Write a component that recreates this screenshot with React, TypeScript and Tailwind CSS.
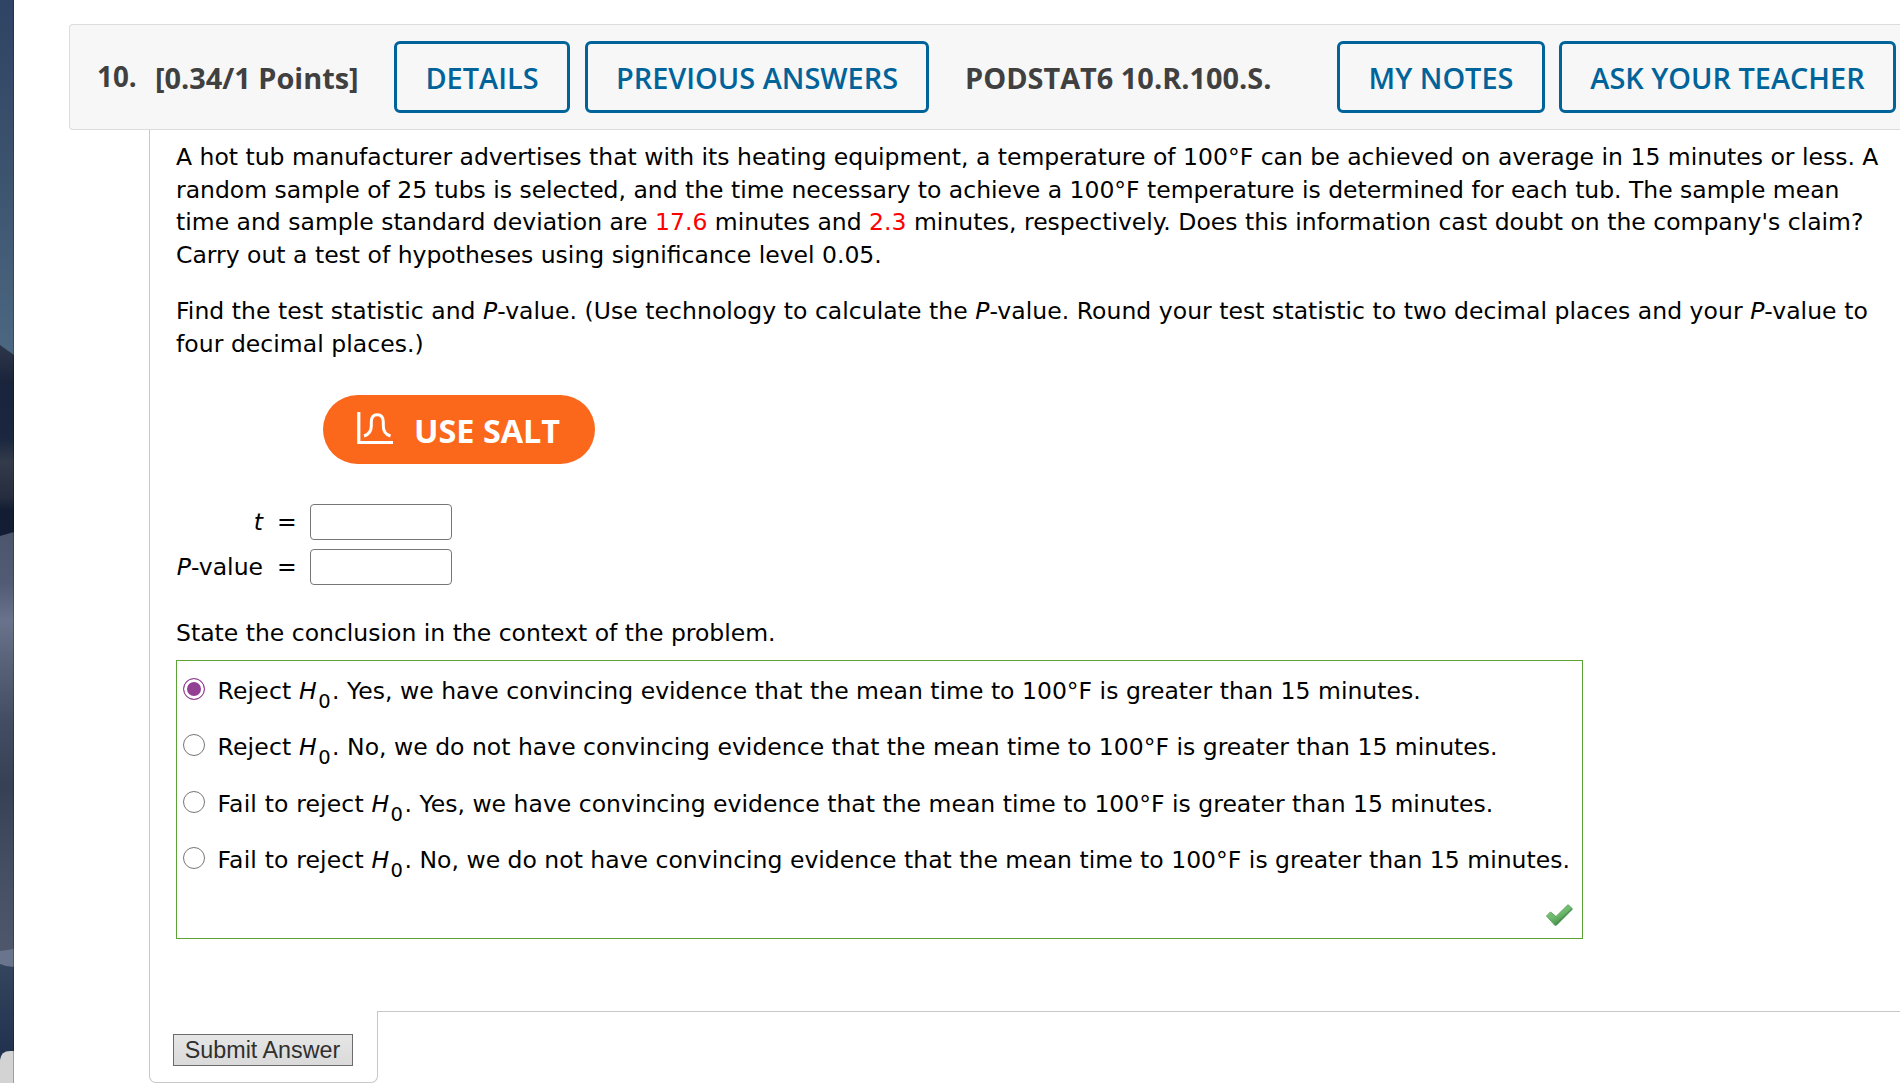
import { useState } from "react";
import type { ReactNode } from "react";

const H0 = () => (
  <>
    <i>H</i>
    <sub className="bottom-[-9px] mr-[1.5px] ml-[1.5px] text-[19.5px]">0</sub>
  </>
);

const options = [
  { start: "Reject ", end: ". Yes, we have convincing evidence that the mean time to 100°F is greater than 15 minutes." },
  { start: "Reject ", end: ". No, we do not have convincing evidence that the mean time to 100°F is greater than 15 minutes." },
  { start: "Fail to reject ", end: ". Yes, we have convincing evidence that the mean time to 100°F is greater than 15 minutes." },
  { start: "Fail to reject ", end: ". No, we do not have convincing evidence that the mean time to 100°F is greater than 15 minutes." },
];

function HeaderButton({ className, children }: { className: string; children: ReactNode }) {
  return (
    <button className={`h-[72px] shrink-0 rounded-[6px] border-[3px] border-[#00639a] pt-[2px] text-center font-semibold whitespace-nowrap text-[#00639a] ${className}`}>
      {children}
    </button>
  );
}

// slice of the desktop wallpaper left of the window
function Wallpaper() {
  return (
    <svg className="h-[1083px] w-[14px] shrink-0" viewBox="0 0 14 1083" preserveAspectRatio="none">
      <defs>
        <linearGradient id="sky" x1="0" y1="0" x2="0" y2="1">
          <stop offset="0" stopColor="#2f4364" />
          <stop offset="0.5" stopColor="#3d546f" />
          <stop offset="1" stopColor="#4c6882" />
        </linearGradient>
        <linearGradient id="rock" x1="0" y1="0" x2="0" y2="1">
          <stop offset="0" stopColor="#2e3649" />
          <stop offset="0.2" stopColor="#18243b" />
          <stop offset="0.48" stopColor="#1a273e" />
          <stop offset="0.6" stopColor="#333b4a" />
          <stop offset="0.78" stopColor="#252d3e" />
          <stop offset="0.85" stopColor="#121d33" />
          <stop offset="1" stopColor="#131e36" />
        </linearGradient>
        <linearGradient id="sand" x1="0" y1="0" x2="0" y2="1">
          <stop offset="0" stopColor="#4b566d" />
          <stop offset="0.12" stopColor="#515c74" />
          <stop offset="0.21" stopColor="#69738b" />
          <stop offset="0.3" stopColor="#59637a" />
          <stop offset="0.45" stopColor="#424d63" />
          <stop offset="0.6" stopColor="#364156" />
          <stop offset="0.8" stopColor="#454f64" />
          <stop offset="1" stopColor="#4e576b" />
        </linearGradient>
        <linearGradient id="lake" x1="0" y1="0" x2="0" y2="1">
          <stop offset="0" stopColor="#34455f" />
          <stop offset="1" stopColor="#1b2c49" />
        </linearGradient>
      </defs>
      <rect width="14" height="360" fill="url(#sky)" />
      <path d="M0 345L14 355V540H0Z" fill="url(#rock)" />
      <path d="M0 536L14 532V955H0Z" fill="url(#sand)" />
      <path d="M0 951L14 949V970H0Z" fill="#69758d" />
      <path d="M0 964Q7 967 14 967V1083H0Z" fill="url(#lake)" />
      <path d="M0 1083V1060Q1 1051 10 1051H14V1083Z" fill="#d3d3d3" />
      <rect x="13" width="1" height="1083" fill="#000" fillOpacity="0.25" />
    </svg>
  );
}

function SaltIcon() {
  return (
    <svg className="mb-[2px] h-[33px] w-[36px]" viewBox="0 0 36 33" fill="none" stroke="#fff">
      <path d="M1.8 0V30.5H36" strokeWidth="3.2" />
      <path d="M7 24C12 22.5 14.3 19.5 14.3 14V10C14.3 5.5 16 2.7 20.2 2.7S26.3 5.5 26.3 10V14C26.3 19.5 28.3 22.5 33.5 24" strokeWidth="3" />
    </svg>
  );
}

function CheckMark() {
  return (
    <svg className="h-[24px] w-[29px]" viewBox="0 0 29 24">
      <defs>
        <linearGradient id="check" x1="0" y1="0" x2="0.6" y2="1">
          <stop offset="0" stopColor="#8bc98a" />
          <stop offset="0.55" stopColor="#6dba6d" />
          <stop offset="1" stopColor="#3f8842" />
        </linearGradient>
      </defs>
      <path d="M1.5 13L5.5 9L11 13.5L23 1.7L27.5 5.8L11 22.5H10Z" fill="url(#check)" stroke="#5fa661" strokeWidth="1" strokeLinejoin="round" />
      <path d="M11 21.8L27 6" stroke="#3f8444" strokeWidth="1.4" strokeOpacity="0.7" />
    </svg>
  );
}

export default function App() {
  const [selected, setSelected] = useState(0);
  const [tValue, setTValue] = useState("");
  const [pValue, setPValue] = useState("");

  return (
    <div className="flex h-[1083px] w-[1900px] overflow-hidden bg-white font-['DejaVu_Sans',sans-serif] text-[23.5px] leading-[32.7px] text-black">
      <Wallpaper />
      <main className="flex min-w-0 flex-1 flex-col pt-[24px] pl-[55px]">
        <header className="flex h-[106px] shrink-0 items-center rounded-l-[4px] border border-r-0 border-[#dcdcdc] bg-[#f7f7f7] pl-[27px] font-['Open_Sans',sans-serif] text-[28.9px] text-[#404040]">
          <div className="w-[58px] shrink-0 pb-[1px] text-[27.8px] font-bold">10.</div>
          <div className="w-[239px] shrink-0 pt-[2px] font-bold whitespace-nowrap">[0.34/1 Points]</div>
          <HeaderButton className="w-[176px]">DETAILS</HeaderButton>
          <HeaderButton className="ml-[15px] w-[344px]">PREVIOUS ANSWERS</HeaderButton>
          <div className="ml-[36px] w-[372px] shrink-0 pt-[2px] font-bold whitespace-nowrap">PODSTAT6 10.R.100.S.</div>
          <HeaderButton className="w-[208px]">MY NOTES</HeaderButton>
          <HeaderButton className="ml-[14px] w-[337px]">ASK YOUR TEACHER</HeaderButton>
        </header>

        <section className="ml-[80px] h-[881px] shrink-0 border-l border-[#c8c8c8] pt-[11px] pl-[26px]">
          <p className="whitespace-nowrap">
            A hot tub manufacturer advertises that with its heating equipment, a temperature of 100°F can be achieved on average in 15 minutes or less. A<br />
            <span className="tracking-[-0.02px]">random sample of 25 tubs is selected, and the time necessary to achieve a 100°F temperature is determined for each tub. The sample mean</span><br />
            time and sample standard deviation are <span className="text-[#ff0000]">17.6</span> minutes and <span className="text-[#ff0000]">2.3</span> minutes, respectively. Does this information cast doubt on the company's claim?<br />
            Carry out a test of hypotheses using significance level 0.05.
          </p>
          <p className="mt-[23.2px] tracking-[0.04px] whitespace-nowrap">
            Find the test statistic and <i>P</i>-value. (Use technology to calculate the <i>P</i>-value. Round your test statistic to two decimal places and your <i>P</i>-value to<br />
            four decimal places.)
          </p>

          <button className="mt-[35px] ml-[147px] flex h-[69px] w-[272px] items-center rounded-full bg-[#fb681c] pl-[34px] font-['Open_Sans',sans-serif] text-[32.4px] font-bold whitespace-nowrap text-white">
            <SaltIcon />
            <span className="pt-[1px] pl-[21px]">USE SALT</span>
          </button>

          <div className="mt-[39.6px] grid grid-cols-[87px_47px_142px] items-center gap-y-[9px]">
            <i className="text-right">t</i>
            <span className="pl-[14px]">=</span>
            <input value={tValue} onChange={e => setTValue(e.target.value)} className="h-[36px] rounded-[4px] border border-[#767676] bg-white px-2 outline-none" />
            <span className="text-right whitespace-nowrap"><i>P</i>-value</span>
            <span className="pl-[14px]">=</span>
            <input value={pValue} onChange={e => setPValue(e.target.value)} className="h-[36px] rounded-[4px] border border-[#767676] bg-white px-2 outline-none" />
          </div>

          <p className="mt-[32px]">State the conclusion in the context of the problem.</p>
          <div className="mt-[10px] flex h-[279px] w-[1407px] flex-col border border-[#5ca336] pt-[14px] pl-[6px]">
            {options.map((o, i) => (
              <label key={i} className="flex h-[56.6px] items-start whitespace-nowrap">
                <input
                  type="radio"
                  name="conclusion"
                  checked={selected === i}
                  onChange={() => setSelected(i)}
                  className="mt-[3px] mr-[12.6px] size-[22px] shrink-0 appearance-none rounded-full border-[1.5px] border-[#767676] checked:border-[#933f93] checked:bg-[#933f93] checked:shadow-[inset_0_0_0_3px_white]"
                />
                <span className="tracking-[0.01px]"><span className="tracking-[0.15px]">{o.start}</span><H0 />{o.end}</span>
              </label>
            ))}
            <div className="mt-[2px] flex justify-end pr-[8px]">
              <CheckMark />
            </div>
          </div>
        </section>

        <div className="ml-[80px] flex h-[72px] shrink-0">
          <div className="h-[72px] w-[229px] shrink-0 rounded-b-[7px] border border-t-0 border-[#c8c8c8] pt-[23px] pl-[23px]">
            <button className="flex h-[32px] w-[180px] items-center justify-center border border-[#6b6b6b] bg-linear-to-b from-[#e6e6e6] to-[#dadada] pr-[1px] font-['Liberation_Sans',sans-serif] text-[23.3px] whitespace-nowrap text-[#303030]">
              Submit Answer
            </button>
          </div>
          <div className="flex-1 border-t border-[#c8c8c8]" />
        </div>
      </main>
    </div>
  );
}
